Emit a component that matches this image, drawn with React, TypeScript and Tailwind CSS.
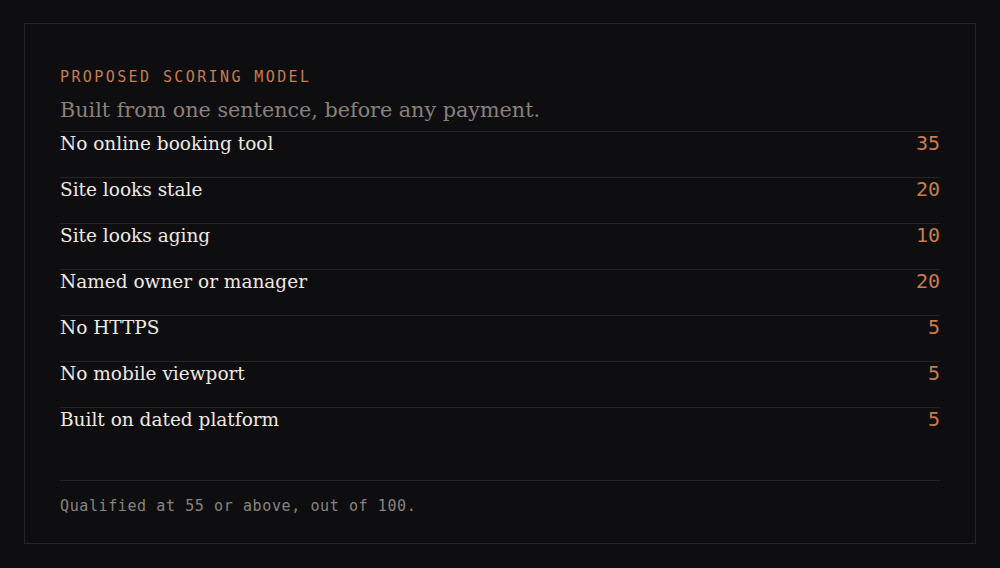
import React from 'react';

const rows: { label: string; points: number }[] = [
  { label: 'No online booking tool', points: 35 },
  { label: 'Site looks stale', points: 20 },
  { label: 'Site looks aging', points: 10 },
  { label: 'Named owner or manager', points: 20 },
  { label: 'No HTTPS', points: 5 },
  { label: 'No mobile viewport', points: 5 },
  { label: 'Built on dated platform', points: 5 },
];

const mono = "font-['DejaVu_Sans_Mono',monospace]";
const serif = "font-['DejaVu_Serif',serif]";

const App: React.FC = () => {
  return (
    <div className="min-h-screen bg-[#0e0e10] px-6 py-[23px]">
      <div className="border border-[#252528] bg-[#0e0e10] px-[35px] pt-[43px] pb-[27px]">
        <p className={`${mono} mb-[9px] text-[15px] leading-5 tracking-[0.16em] text-[#c97b4b]`}>
          PROPOSED SCORING MODEL
        </p>
        <h2 className={`${serif} mb-[7px] text-[20.7px] leading-7 text-[#8a807a]`}>
          Built from one sentence, before any payment.
        </h2>

        <div>
          {rows.map((row) => (
            <div
              key={row.label}
              className="flex h-[46px] items-baseline justify-between border-t border-[#252528] leading-[23px]"
            >
              <span className={`${serif} text-[18.5px] text-[#eee9e2]`}>{row.label}</span>
              <span className={`${mono} text-[20px] text-[#c97b4b]`}>{row.points}</span>
            </div>
          ))}
        </div>

        <div className="mt-[27px] border-t border-[#252528] pt-[15px]">
          <p className={`${mono} text-[15px] leading-5 tracking-[0.6px] text-[#8a827c]`}>
            Qualified at 55 or above, out of 100.
          </p>
        </div>
      </div>
    </div>
  );
};

export default App;
